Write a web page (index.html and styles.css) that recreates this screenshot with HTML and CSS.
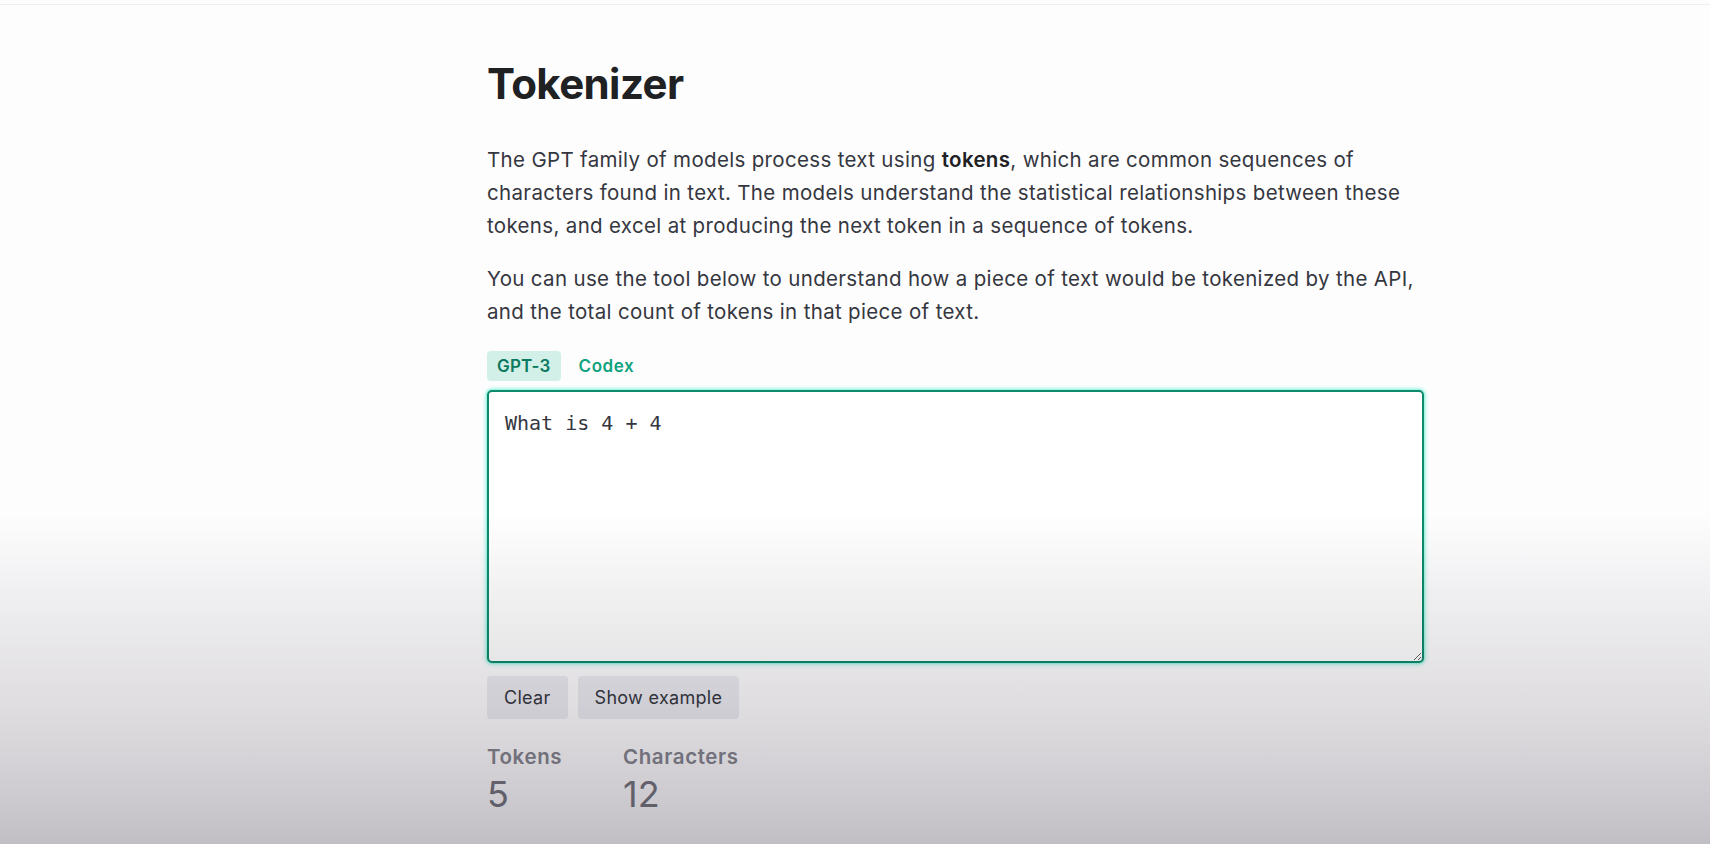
FILE: index.html
```html
<!DOCTYPE html>
<html lang="en">
<head>
<meta charset="utf-8">
<title>Tokenizer</title>
<link rel="stylesheet" href="styles.css">
</head>
<body>
<div class="topbar"></div>
<main class="content">
  <h1 class="title">Tokenizer</h1>
  <p class="para">The GPT family of models process text using <strong>tokens</strong>, which are common sequences of characters found in text. The models understand the statistical relationships between these tokens, and excel at producing the next token in a sequence of tokens.</p>
  <p class="para para-second">You can use the tool below to understand how a piece of text would be tokenized by the API, and the total count of tokens in that piece of text.</p>
  <div class="tabs">
    <button class="tab tab-active">GPT-3</button>
    <button class="tab tab-codex">Codex</button>
  </div>
  <textarea class="input input-focused" autofocus spellcheck="false">What is 4 + 4</textarea>
  <div class="actions">
    <button class="btn">Clear</button>
    <button class="btn">Show example</button>
  </div>
  <div class="stats">
    <div class="stat stat-tokens">
      <div class="stat-label">Tokens</div>
      <div class="stat-value">5</div>
    </div>
    <div class="stat">
      <div class="stat-label">Characters</div>
      <div class="stat-value">12</div>
    </div>
  </div>
</main>
<div class="shade"></div>
</body>
</html>
```

FILE: styles.css
```css
html, body {
  margin: 0;
  padding: 0;
}

body {
  background: #fefdfe;
  font-family: Inter, "Noto Sans", "Liberation Sans", sans-serif;
  color: #353740;
  height: 844px;
  overflow: hidden;
}

.topbar {
  height: 4px;
  border-bottom: 1px solid #eeedf1;
}

.content {
  margin-left: 487px;
  width: 937px;
  padding-top: 54px;
}

.title {
  margin: 0;
  font-size: 42px;
  line-height: 50px;
  font-weight: 700;
  color: #202123;
  letter-spacing: -0.6px;
}

.para {
  margin: 34px 0 0;
  font-size: 20.5px;
  line-height: 33px;
  letter-spacing: 0.33px;
  color: #353740;
}

.para strong {
  font-weight: 600;
  color: #202123;
}

.para-second {
  margin-top: 20px;
}

.tabs {
  display: flex;
  gap: 8px;
  margin-top: 23px;
}

.tab {
  border: 0;
  background: transparent;
  font-family: inherit;
  font-size: 17px;
  font-weight: 600;
  line-height: 30px;
  letter-spacing: 0.2px;
  padding: 0 10px;
  border-radius: 4px;
  color: #10a37f;
}

.tab-codex {
  letter-spacing: 0.6px;
}

.tab-active {
  background: #d2f0e7;
  color: #0c7a5f;
}

.input {
  display: block;
  box-sizing: border-box;
  width: 100%;
  height: 273px;
  margin-top: 9px;
  padding: 16px 16px;
  border: 2px solid #0f8a6c;
  border-radius: 5px;
  background: #ffffff;
  font-family: "DejaVu Sans Mono", "Liberation Mono", monospace;
  font-size: 20px;
  line-height: 30px;
  color: #353740;
  outline: none;
  resize: vertical;
}

.input-focused {
  box-shadow: 0 0 0 1px #9ff5e3, 0 0 4px 1px #7ff0d8;
}

.actions {
  display: flex;
  gap: 10px;
  margin-top: 13px;
}

.btn {
  height: 43px;
  border: 0;
  border-radius: 4px;
  padding: 0 17px;
  background: #ececf1;
  font-family: inherit;
  font-size: 18px;
  letter-spacing: 0.3px;
  color: #353740;
}

.stats {
  display: flex;
  margin-top: 26px;
}

.stat-tokens {
  width: 136px;
}

.stat-label {
  font-size: 20.5px;
  line-height: 24px;
  font-weight: 600;
  letter-spacing: 0.6px;
  color: #85858f;
}

.stat-value {
  margin-top: 5px;
  font-size: 36px;
  line-height: 40px;
  color: #75757f;
}

.shade {
  position: fixed;
  inset: 0;
  pointer-events: none;
  background: linear-gradient(to bottom,
    rgba(20, 15, 30, 0) 0%,
    rgba(20, 15, 30, 0) 61%,
    rgba(20, 15, 30, 0.06) 70%,
    rgba(20, 15, 30, 0.13) 83%,
    rgba(20, 15, 30, 0.17) 89%,
    rgba(20, 15, 30, 0.22) 95.6%,
    rgba(20, 15, 30, 0.26) 100%);
}
```
